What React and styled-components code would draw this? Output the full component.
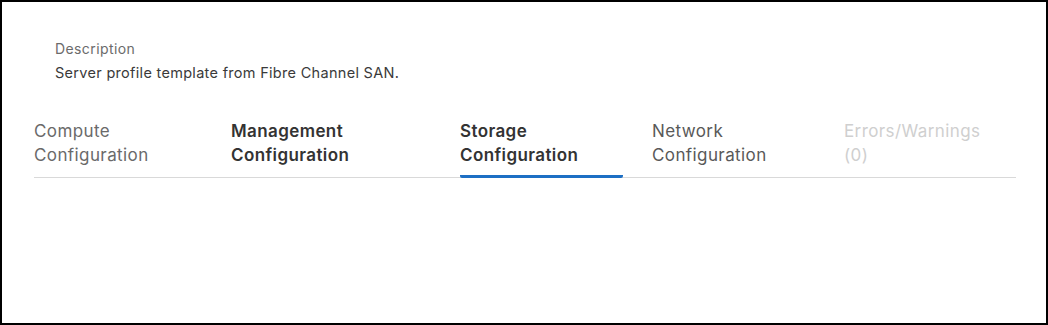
import React from "react";
import styled, { createGlobalStyle } from "styled-components";

const Global = createGlobalStyle`
  html, body { margin: 0; padding: 0; background: #fff; }
  body { font-family: Inter, "Noto Sans", sans-serif; -webkit-font-smoothing: antialiased; }
  * { box-sizing: border-box; }
`;

const Frame = styled.div`
  width: 1048px;
  height: 325px;
  border: 2px solid #000;
  background: #fff;
  padding: 38px 0 0 32px;
`;

const Field = styled.div`
  display: flex;
  flex-direction: column;
  gap: 5px;
  padding-left: 21px;
`;

const Label = styled.div`
  font-size: 14px;
  line-height: 18px;
  letter-spacing: 0.4px;
  color: #6b6b6b;
`;

const Value = styled.div`
  font-size: 14.5px;
  line-height: 20px;
  letter-spacing: 0.3px;
  color: #3a3a3a;
`;

const TabList = styled.div`
  display: flex;
  width: 982px;
  margin-top: 36px;
  border-bottom: 1px solid #d9d9d9;
`;

const Tab = styled.div`
  width: ${(p) => (p.$w ? `${p.$w}px` : "auto")};
  margin-right: 29px;
  padding: 0 0 8px 0;
  font-size: 17px;
  line-height: 24px;
  letter-spacing: 0.4px;
  font-weight: ${(p) => (p.$bold ? 600 : 400)};
  color: ${(p) => p.$color};
  border-bottom: 3px solid ${(p) => (p.$active ? "#1d6fc4" : "transparent")};
  border-radius: 2px;
  margin-bottom: -1px;
`;

const tabs = [
  { label: ["Compute", "Configuration"], w: 168, color: "#6a6a6a" },
  { label: ["Management", "Configuration"], w: 200, color: "#333", bold: true },
  { label: ["Storage", "Configuration"], w: 163, color: "#333", bold: true, active: true },
  { label: ["Network", "Configuration"], w: 163, color: "#595959" },
  { label: ["Errors/Warnings", "(0)"], color: "#cfcfcf" },
];

export default function App() {
  return (
    <>
      <Global />
      <Frame>
        <Field>
          <Label>Description</Label>
          <Value>Server profile template from Fibre Channel SAN.</Value>
        </Field>
        <TabList>
          {tabs.map((t) => (
            <Tab key={t.label[0]} $w={t.w} $color={t.color} $bold={t.bold} $active={t.active}>
              {t.label[0]}
              <br />
              {t.label[1]}
            </Tab>
          ))}
        </TabList>
      </Frame>
    </>
  );
}
